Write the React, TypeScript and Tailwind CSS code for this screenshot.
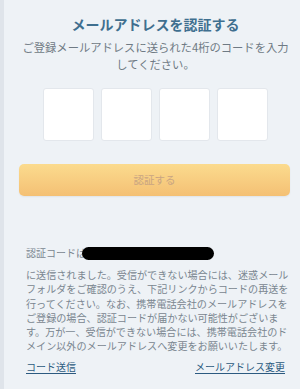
export default function App() {
  const font = { fontFamily: '"Noto Sans CJK JP", "Noto Sans", sans-serif' }

  const lines = [
    'に送信されました。受信ができない場合には、迷惑メール',
    'フォルダをご確認のうえ、下記リンクからコードの再送を',
    '行ってください。なお、携帯電話会社のメールアドレスを',
    'ご登録の場合、認証コードが届かない可能性がございま',
    'す。万が一、受信ができない場合には、携帯電話会社のド',
    'メイン以外のメールアドレスへ変更をお願いいたします。',
  ]

  return (
    <div
      className="min-h-screen border-l-[4px] border-[#dfe4ea] bg-[#eef2f6] pl-[22px] pr-[15px] pt-[12px] text-[#7a8690]"
      style={font}
    >
      <h1 className="text-center text-[14px] font-bold leading-[24px] text-[#3f6f8f]">
        メールアドレスを認証する
      </h1>
      <p className="-mx-[8px] mt-[3px] text-center text-[11.3px] leading-[17px] text-[#6f7a84]">
        ご登録メールアドレスに送られた4桁のコードを入力
        <br />
        してください。
      </p>

      <div className="mt-[15px] flex justify-center gap-[7px]">
        {[0, 1, 2, 3].map((i) => (
          <input
            key={i}
            maxLength={1}
            className="h-[53px] w-[51px] rounded-[3px] border border-[#e3e7ec] bg-white text-center text-lg outline-none"
          />
        ))}
      </div>

      <button
        type="button"
        className="-ml-[7px] mt-[23px] flex h-[32px] w-[calc(100%+12px)] items-center justify-center rounded-[5px] bg-gradient-to-b from-[#fbdb8e] to-[#f4c074] text-[10.5px] text-[#c9a582] shadow-[0_1px_2px_rgba(0,0,0,0.06)]"
      >
        認証する
      </button>

      <div className="mt-[50px] flex items-center text-[10px] leading-[14px] text-[#7a8690]">
        <span>認証コードは</span>
        <span className="-ml-[4px] h-[13px] w-[132px] rounded-full bg-black" />
      </div>

      <p className="mt-[8px] whitespace-nowrap text-[10.1px] leading-[14.3px] text-[#7a8690]">
        {lines.map((l, i) => (
          <span key={i} className="block">
            {l}
          </span>
        ))}
      </p>

      <div className="mt-[6px] flex items-center justify-between text-[10px] leading-[14px] text-[#2c5a80]">
        <a href="#" className="underline underline-offset-2">
          コード送信
        </a>
        <a href="#" className="underline underline-offset-2">
          メールアドレス変更
        </a>
      </div>
    </div>
  )
}
